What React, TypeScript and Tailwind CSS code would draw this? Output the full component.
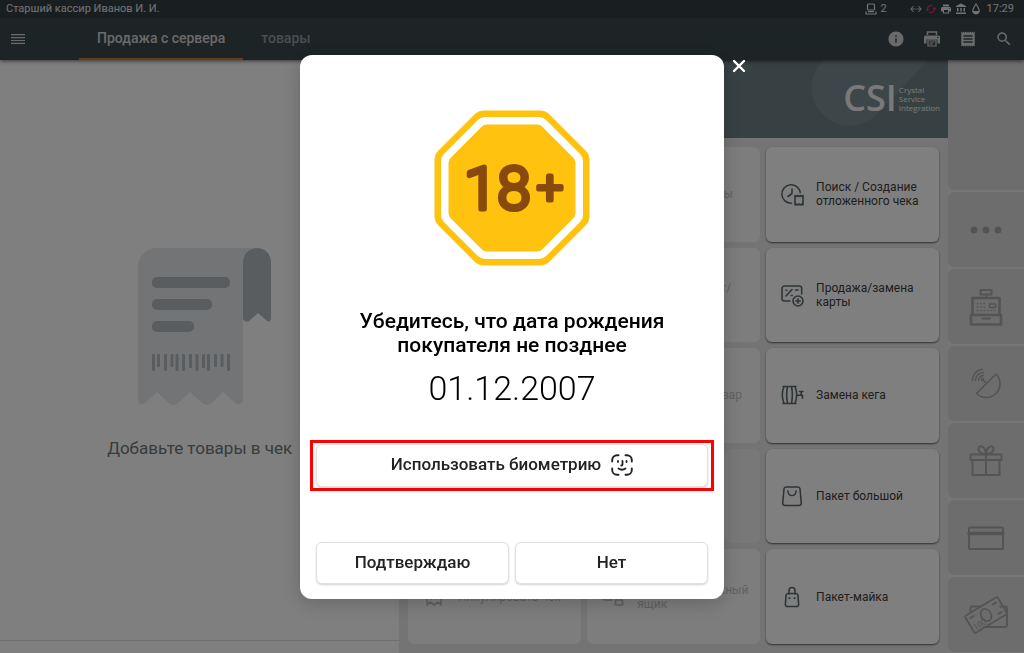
import type { ReactNode } from 'react'
import { MdAccountBalance, MdInfo, MdPrint, MdReceipt, MdSearch, MdSync } from 'react-icons/md'

// ---------------------------------------------------------------------------
// Tile icons
// ---------------------------------------------------------------------------

function LineIcon({ children }: { children: ReactNode }) {
  return (
    <svg
      viewBox="0 0 24 24"
      className="size-6 shrink-0"
      fill="none"
      stroke="currentColor"
      strokeWidth="1.6"
      strokeLinecap="round"
      strokeLinejoin="round"
      aria-hidden="true"
    >
      {children}
    </svg>
  )
}

const deferredIcon = (
  <LineIcon>
    <path d="M11.500 21.300A9.300 9.300 0 1 1 20.300 10.500M12 7v4.500l-4 3" />
    <path d="M15 13.500l1.500 1 1.500-1 1.500 1 1.500-1 1.500 1 .5-1V23l-1-1-1.500 1-1.500-1-1.500 1-1.500-1-1 1z" />
  </LineIcon>
)

const cardIcon = (
  <LineIcon>
    <path d="M10 18H4.500a2.500 2.500 0 0 1-2.500-2.500v-10A2.500 2.500 0 0 1 4.500 3h14.700a2.500 2.500 0 0 1 2.500 2.500V11" />
    <path d="M6 13l6-6.500M6 7.200h.9M11.300 12.500h.9M15.500 7h2.500" />
    <circle cx="18" cy="18" r="5" />
    <path d="M18 15.800v4.400M15.800 18h4.400" />
  </LineIcon>
)

const kegIcon = (
  <LineIcon>
    <path d="M3 3.500h13M3 20.500h13M4 3.500c-2 5-2 12 0 17M15 3.500c2 5 2 12 0 17M7.500 3.500c-1 5-1 12 0 17M11.500 3.500c1 5 1 12 0 17" />
    <path d="M17 12.300h5M19.500 8.500h3.500M21.200 8.500v4M22.500 12.300v3" />
  </LineIcon>
)

const bigBagIcon = (
  <LineIcon>
    <path d="M6 3h12a2 2 0 0 1 2 1.800L21.300 19a2.300 2.300 0 0 1-2.300 2.500H5A2.300 2.300 0 0 1 2.700 19L4 4.800A2 2 0 0 1 6 3zM8 7v.5a4 4 0 0 0 8 0V7" />
  </LineIcon>
)

const smallBagIcon = (
  <LineIcon>
    <path d="M9 9V5.500a3 3 0 0 1 6 0V9M8 8.500h8a2 2 0 0 1 2 1.800l.6 9a2 2 0 0 1-2 2.200H7.400a2 2 0 0 1-2-2.200l.6-9A2 2 0 0 1 8 8.500z" />
    <path d="M9.500 13v.3M14.500 13v.3" strokeWidth="2" />
  </LineIcon>
)

const voidIcon = (
  <LineIcon>
    <path d="M5 4h14v16l-3-3-4 3-4-3-3 3zM9 9l6 5M15 9l-6 5" />
  </LineIcon>
)

const drawerIcon = (
  <LineIcon>
    <path d="M2 5h16v6M2 5v8a2 2 0 0 0 2 2h7M16 15v-1.500a2 2 0 0 1 4 0V15M14.500 15h7v5h-7z" />
  </LineIcon>
)

interface Tile {
  label?: string
  icon?: ReactNode
  disabled?: boolean
}

const TILES: Tile[] = [
  { disabled: true },
  { label: 'Внесение суммы', disabled: true },
  { label: 'Поиск / Создание\nотложенного чека', icon: deferredIcon },
  { disabled: true },
  { label: 'Активация карт/\nзамена', disabled: true },
  { label: 'Продажа/замена\nкарты', icon: cardIcon },
  { disabled: true },
  { label: 'Возвратный товар', disabled: true },
  { label: 'Замена кега', icon: kegIcon },
  { disabled: true },
  { disabled: true },
  { label: 'Пакет большой', icon: bigBagIcon },
  { label: 'Аннулировать чек', icon: voidIcon, disabled: true },
  { label: 'Открыть денежный\nящик', icon: drawerIcon, disabled: true },
  { label: 'Пакет-майка', icon: smallBagIcon },
]

function TileButton({ label, icon, disabled }: Tile) {
  if (!label) {
    return <div className="rounded-md bg-[#f1f1f1]" />
  }
  return (
    <button
      type="button"
      disabled={disabled}
      className="flex items-center gap-3 rounded-md bg-white pl-3.5 text-left text-xs leading-[14px] whitespace-pre-line text-[#3c3c3c] shadow-[0_1px_2px_rgba(0,0,0,0.6)] disabled:bg-[#fbfbfb] disabled:text-[#c4c4c4] disabled:shadow-none"
    >
      <span className={disabled ? 'w-6 text-[#c0c0c0]' : 'w-6 text-[#5d6a70]'}>{icon}</span>
      <span>{label}</span>
    </button>
  )
}

// ---------------------------------------------------------------------------
// Side rail
// ---------------------------------------------------------------------------

function RailIcon({ children }: { children: ReactNode }) {
  return (
    <svg
      viewBox="0 0 48 48"
      className="size-12"
      fill="none"
      stroke="currentColor"
      strokeWidth="2"
      strokeLinecap="round"
      strokeLinejoin="round"
      aria-hidden="true"
    >
      {children}
    </svg>
  )
}

const RAIL: { name: string; icon: ReactNode }[] = [
  {
    name: 'Ещё',
    icon: (
      <RailIcon>
        <g fill="currentColor" stroke="none">
          <circle cx="12" cy="24" r="3.500" />
          <circle cx="24" cy="24" r="3.500" />
          <circle cx="36" cy="24" r="3.500" />
        </g>
      </RailIcon>
    ),
  },
  {
    name: 'Касса',
    icon: (
      <RailIcon>
        <path d="M18.500 7h11v4.500h-11zM24 12v2.500" />
        <path d="M10.500 31V15h27v16M9 32h30v9.500H9z" strokeWidth="2.600" />
        <path d="M20.500 35.500h7.500" />
        <path d="M27.500 21h6v3.500h-6z" strokeWidth="1.600" />
        <path d="M15.500 20.500h7M15.500 24h7M15.500 27.500h17.500" strokeWidth="1.700" strokeDasharray="0.100 3.300" />
      </RailIcon>
    ),
  },
  {
    name: 'Связь',
    icon: (
      <RailIcon>
        <path d="M34 14 14.500 33.500a13.700 13.700 0 1 0 19.500-19.500zM24.500 23.500l-4-4" strokeWidth="1.600" />
        <path d="M16.500 20.500a5 5 0 0 1 5-5M13.500 20.500a8 8 0 0 1 8-8M10.500 20.500a11 11 0 0 1 10-11.200" strokeWidth="1.500" />
        <circle cx="20.500" cy="19.500" r=".8" />
      </RailIcon>
    ),
  },
  {
    name: 'Подарки',
    icon: (
      <RailIcon>
        <path d="M8.500 17.500h31v5.500h-31zM10.500 23v15h27V23M24 17.500V38" />
        <path d="M24 17c-4 0-8-2-7.500-5.500S23 8 24 17c1-9 7-9 7.500-5.500S28 17 24 17z" />
      </RailIcon>
    ),
  },
  {
    name: 'Карта',
    icon: (
      <RailIcon>
        <rect x="7" y="13.500" width="34" height="21.500" rx="1" />
        <path d="M7 19.500h34" strokeWidth="3.500" />
      </RailIcon>
    ),
  },
  {
    name: 'Наличные',
    icon: (
      <RailIcon>
        <path d="M8.500 20v-3a1.500 1.500 0 0 1 1.500-1.500h8M45 22v12a2 2 0 0 1-2 2H22M38 15.500h5.500A1.500 1.500 0 0 1 45 17v6" strokeWidth="1.800" />
        <g transform="rotate(-31 24 24)" strokeWidth="1.800">
          <rect x="5" y="14" width="38" height="20" rx="1.500" />
          <ellipse cx="24" cy="24" rx="5" ry="6.500" />
          <path d="M9 18.500h4M35 18.500h4M35 29.500h4" />
          <text x="7" y="31.500" fontSize="8" fontFamily="Roboto, sans-serif" fill="currentColor" stroke="none">
            100
          </text>
        </g>
      </RailIcon>
    ),
  },
]

// ---------------------------------------------------------------------------
// Header
// ---------------------------------------------------------------------------

function StatusBar() {
  return (
    <div className="flex h-[18px] items-center justify-between bg-[#323e43] pr-2.5 pl-1.5 text-[11px] text-[#e4e4e4]">
      <span>Старший кассир Иванов И. И.</span>
      <div className="flex items-center gap-[3px]">
        <svg viewBox="0 0 12 12" className="size-3" fill="none" stroke="currentColor" strokeWidth="1.200" aria-hidden="true">
          <rect x="2.500" y="1" width="7" height="6" rx="1" />
          <path d="M3 8.700h6M1 8.500v2.500h10V8.500" />
        </svg>
        <span className="mr-5">2</span>
        <svg viewBox="0 0 12 12" className="size-3" fill="none" stroke="currentColor" aria-hidden="true">
          <path d="M3.500 3 .8 6l2.700 3M8.500 3l2.700 3-2.700 3M1 6h3.500M7.500 6H11" />
          <path d="M5.500 6h1" />
        </svg>
        <MdSync className="size-3 rotate-90 text-[#ff2f5f]" />
        <MdPrint className="size-3" />
        <MdAccountBalance className="size-3" />
        <svg viewBox="0 0 12 12" className="size-3" fill="none" stroke="currentColor" strokeWidth="1.200" aria-hidden="true">
          <path d="M6 1C4.500 3.300 2.800 5.200 2.800 7.600a3.200 3.200 0 0 0 6.400 0C9.200 5.200 7.500 3.300 6 1z" />
          <path d="M3 8h6a3 3 0 0 1-6 0z" fill="currentColor" stroke="none" />
        </svg>
        <span className="ml-0.5">17:29</span>
      </div>
    </div>
  )
}

function Header() {
  return (
    <header className="relative z-10 shadow-[0_1px_4px_rgba(0,0,0,0.6)]">
      <StatusBar />
      <div className="flex h-[42px] items-stretch justify-between bg-[#3b494d] text-[#d4d4d4]">
        <div className="flex items-stretch">
          <button type="button" aria-label="Меню" className="flex w-[79px] items-center pl-[11px]">
            <svg viewBox="0 0 14 10" className="h-2.5 w-3.5" stroke="currentColor" strokeWidth="1.200" aria-hidden="true">
              <path d="M0 .7h14M0 3.600h14M0 6.500h14M0 9.400h14" />
            </svg>
          </button>
          <nav className="flex items-stretch text-sm font-medium">
            <a href="#server" className="flex items-center border-b-2 border-[#d9772a] px-[18px]">
              Продажа с сервера
            </a>
            <a href="#goods" className="flex items-center border-b-2 border-transparent px-[18px] text-[#949da0]">
              товары
            </a>
          </nav>
        </div>
        <div className="flex items-stretch pr-0.5">
          <button type="button" aria-label="Информация" className="flex w-9 items-center justify-center">
            <MdInfo className="size-[18px]" />
          </button>
          <button type="button" aria-label="Печать" className="flex w-9 items-center justify-center">
            <svg viewBox="0 0 18 18" className="size-[18px]" fill="none" stroke="currentColor" strokeWidth="1.400" aria-hidden="true">
              <path d="M4.500 5V2h9v3" />
              <path d="M2.500 5.500h13a1.500 1.500 0 0 1 1.500 1.500v6.500h-2.500V9.500h-11v4H1V7a1.500 1.500 0 0 1 1.500-1.500z" fill="currentColor" stroke="none" />
              <path d="M5 10h8v6H5zM6.500 12h5M6.500 14h3.500" strokeWidth="1.200" />
              <circle cx="14.800" cy="7.500" r=".8" fill="#3b494d" stroke="none" />
            </svg>
          </button>
          <button type="button" aria-label="Чек" className="flex w-9 items-center justify-center">
            <MdReceipt className="size-[18px]" />
          </button>
          <button type="button" aria-label="Поиск" className="flex w-9 items-center justify-center">
            <MdSearch className="size-[18px]" />
          </button>
        </div>
      </div>
    </header>
  )
}

// ---------------------------------------------------------------------------
// Receipt panel
// ---------------------------------------------------------------------------

const BARCODE = [
  [0, 17], [5, 13], [12, 17], [18.500, 13], [23.500, 17], [30, 17], [37, 14],
  [43.500, 17], [50, 14], [55, 17], [62, 13], [68.500, 13], [75, 17],
]

function ReceiptArt() {
  return (
    <svg viewBox="0 0 134 158" className="ml-2 h-[158px] w-[134px]" aria-hidden="true">
      <path
        d="M20 0h98a14 14 0 0 0-12 14v139q-3 6-8 2L86 144 75 155q-5 4-10 0L53 144 41 155q-5 4-9 0L20 144 8 155q-6 4-7-2V18A19 19 0 0 1 20 0z"
        fill="#e5e8ea"
      />
      <path d="M120 0a14 14 0 0 1 14 14v57q-1 4-4 2l-9-8-9 8q-4 2-6-2V14A14 14 0 0 1 120 0z" fill="#b3babe" />
      <g fill="#b3babe">
        <rect x="15" y="29" width="78" height="11" rx="5" />
        <rect x="15" y="51" width="60" height="11" rx="5" />
        <rect x="15" y="73" width="42" height="11" rx="5" />
        {BARCODE.map(([x, h]) => (
          <rect key={x} x={15 + x} y="106" width="3" height={h} rx="1" />
        ))}
      </g>
    </svg>
  )
}

function ReceiptPanel() {
  return (
    <section className="flex w-[39%] flex-col bg-white">
      <div className="flex flex-1 flex-col items-center justify-center gap-[30px] border-b border-[#dedede] pt-2">
        <ReceiptArt />
        <p className="text-[17px] leading-6 text-[#70777b]">Добавьте товары в чек</p>
      </div>
      <div className="h-3" />
    </section>
  )
}

function Banner() {
  return (
    <div className="relative flex h-[78px] items-center justify-end overflow-hidden bg-[#6f8286] pr-2 pb-0.5">
      <svg viewBox="0 0 140 78" className="absolute top-0 right-0 h-[78px] w-[140px]" aria-hidden="true">
        <path d="M120 0 67 56A37 37 0 1 1 16 0z" fill="#7b8d90" />
      </svg>
      <div className="relative flex items-center gap-0.5 text-[#f2f2f2]">
        <span className="font-['Open_Sans',sans-serif] text-[36px] leading-10 font-semibold">CSI</span>
        <span className="font-['Open_Sans',sans-serif] text-[8px] leading-[9px]">
          Crystal
          <br />
          Service
          <br />
          Integration
        </span>
      </div>
    </div>
  )
}

// ---------------------------------------------------------------------------
// Age check dialog
// ---------------------------------------------------------------------------

function AgeSign() {
  return (
    <svg viewBox="0 0 156 156" className="mx-auto size-[156px]" role="img" aria-label="18+">
      <g strokeLinejoin="round">
        <path d="M50 14h56l36 36v56l-36 36H50l-36-36V50z" fill="#ffc20e" stroke="#ffc20e" strokeWidth="27" />
        <path d="M51 17h54l34 34v54l-34 34H51l-34-34V51z" fill="#fff" stroke="#fff" strokeWidth="20" />
        <path d="M53 22h50l31 31v50l-31 31H53l-31-31V53z" fill="#ffc20e" stroke="#ffc20e" strokeWidth="15" />
      </g>
      <g
        fill="#874a0c"
        stroke="#874a0c"
        strokeLinejoin="round"
        strokeLinecap="round"
        fontFamily="Roboto, sans-serif"
        fontWeight="300"
      >
        <text x="30" y="99" fontSize="60" strokeWidth="5">
          18
        </text>
        <text x="103" y="93" fontSize="46" strokeWidth="5">
          +
        </text>
      </g>
    </svg>
  )
}

const dialogButton =
  'flex items-center justify-center rounded-md border border-[#dfe2e4] bg-white text-[17px] font-medium text-[#222] shadow-[0_1px_2px_rgba(0,0,0,0.18)]'

function AgeDialog() {
  return (
    <div className="fixed inset-0 z-20 flex items-center justify-center bg-black/50">
      <div
        role="dialog"
        aria-modal="true"
        aria-labelledby="age-title"
        className="relative w-[424px] rounded-xl bg-white px-2.5 pt-[55px] pb-[15px] shadow-[0_4px_20px_rgba(0,0,0,0.2)]"
      >
        <button type="button" aria-label="Закрыть" className="absolute top-1 left-full ml-2 text-white">
          <svg viewBox="0 0 14 14" className="size-3.5" stroke="currentColor" strokeWidth="2.400" strokeLinecap="round" aria-hidden="true">
            <path d="m2 2 10 10M12 2 2 12" />
          </svg>
        </button>

        <AgeSign />
        <h2 id="age-title" className="mt-[43px] text-center text-[21px] leading-6 font-medium text-black">
          Убедитесь, что дата рождения
          <br />
          покупателя не позднее
        </h2>
        <p className="mt-[9px] text-center text-[34px] leading-[44px] font-light text-black">01.12.2007</p>

        <div className="mt-[30px] border-[3px] border-[#fe0000] px-[3px] py-px">
          <button type="button" className={`${dialogButton} h-[43px] w-full gap-2.5`}>
            Использовать биометрию
            <svg
              viewBox="0 0 22 22"
              className="size-[22px]"
              fill="none"
              stroke="currentColor"
              strokeWidth="1.900"
              strokeLinecap="round"
              aria-hidden="true"
            >
              <path d="M1.200 7.500V6a4.800 4.800 0 0 1 4.800-4.800h1.500M14.500 1.200H16A4.800 4.800 0 0 1 20.800 6v1.500M20.800 14.500V16a4.800 4.800 0 0 1-4.800 4.800h-1.500M7.500 20.800H6A4.800 4.800 0 0 1 1.200 16v-1.500" />
              <path d="M7 7v1M15.500 7v1M11.500 7v3.500q0 1-1.300 1M7.500 14.500q3.500 2.500 7 0" strokeWidth="1.800" />
            </svg>
          </button>
        </div>

        <div className="mt-[51px] grid grid-cols-2 gap-1.5 px-1.5">
          <button type="button" className={`${dialogButton} h-[42px]`}>
            Подтверждаю
          </button>
          <button type="button" className={`${dialogButton} h-[42px]`}>
            Нет
          </button>
        </div>
      </div>
    </div>
  )
}

// ---------------------------------------------------------------------------
// App
// ---------------------------------------------------------------------------

export default function App() {
  return (
    <div className="flex h-dvh flex-col overflow-hidden bg-white font-[Roboto,sans-serif]">
      <Header />
      <main className="flex min-h-0 flex-1">
        <ReceiptPanel />
        <section className="flex min-w-0 flex-1 flex-col bg-[#e9e9e9]">
          <Banner />
          <div className="grid flex-1 auto-rows-fr grid-cols-3 gap-1.5 p-[9px]">
            {TILES.map((tile, i) => (
              <TileButton key={i} {...tile} />
            ))}
          </div>
        </section>
        <aside className="flex w-[76px] flex-col gap-0.5 bg-[#ececec] pb-px text-[#a8a8a8]">
          <div className="flex-1 rounded-bl-md bg-[#dadada]" />
          {RAIL.map((item) => (
            <button
              key={item.name}
              type="button"
              aria-label={item.name}
              className="flex h-[75px] items-center justify-center rounded-l-md bg-[#dadada]"
            >
              {item.icon}
            </button>
          ))}
        </aside>
      </main>
      <AgeDialog />
    </div>
  )
}
